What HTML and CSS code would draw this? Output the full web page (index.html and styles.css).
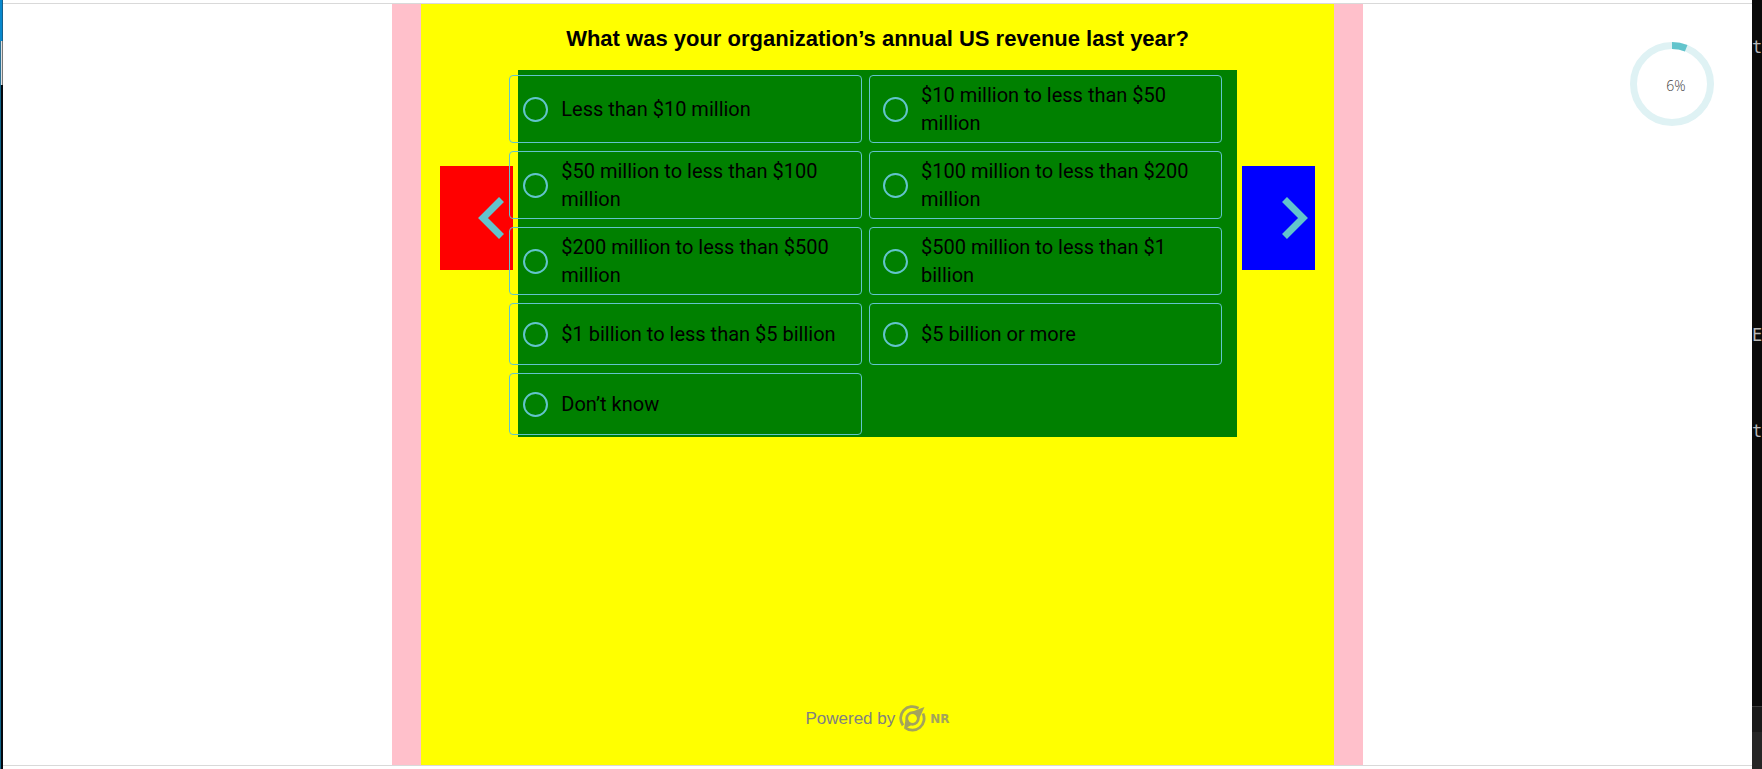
FILE: index.html
```html
<!DOCTYPE html>
<html lang="en">
<head>
<meta charset="utf-8">
<title>Survey</title>
<link rel="stylesheet" href="styles.css">
</head>
<body>
<div class="screen">
  <div class="edge-left"><div class="edge-blue"></div><div class="edge-grey"></div><div class="edge-black"></div></div>
  <div class="page">
    <main class="survey">
      <form class="panel">
        <h1 class="question" id="question">What was your organization’s annual US revenue last year?</h1>
        <div class="stage">
          <button type="button" class="nav nav-prev" aria-label="Previous">
            <svg width="26" height="42" viewBox="0 0 26 42"><path d="M23.500 2.500 5 21l18.500 18.500" fill="none" stroke="#62c4cc" stroke-width="7"/></svg>
          </button>
          <div class="answers" role="radiogroup" aria-labelledby="question">
            <div class="options">
              <label class="option"><input type="radio" name="revenue"><span>Less than $10 million</span></label>
              <label class="option"><input type="radio" name="revenue"><span>$10 million to less than $50 million</span></label>
              <label class="option"><input type="radio" name="revenue"><span>$50 million to less than $100 million</span></label>
              <label class="option"><input type="radio" name="revenue"><span>$100 million to less than $200 million</span></label>
              <label class="option"><input type="radio" name="revenue"><span>$200 million to less than $500 million</span></label>
              <label class="option"><input type="radio" name="revenue"><span>$500 million to less than $1 billion</span></label>
              <label class="option"><input type="radio" name="revenue"><span>$1 billion to less than $5 billion</span></label>
              <label class="option"><input type="radio" name="revenue"><span>$5 billion or more</span></label>
              <label class="option"><input type="radio" name="revenue"><span>Don’t know</span></label>
            </div>
          </div>
          <button type="button" class="nav nav-next" aria-label="Next">
            <svg width="26" height="42" viewBox="0 0 26 42"><path d="M2.500 2.500 21 21 2.500 39.500" fill="none" stroke="#62c4cc" stroke-width="7"/></svg>
          </button>
        </div>
        <footer class="powered">
          <span>Powered by</span>
          <svg width="27" height="27" viewBox="0 0 27 27" fill="none" stroke="#a3a35c">
            <path d="M19.500 3.300A11.700 11.700 0 0 0 4 20.300" stroke-width="2.800"/>
            <path d="M24 8.500A11.700 11.700 0 0 1 6.500 22.900" stroke-width="2.800"/>
            <circle cx="13.500" cy="13.500" r="5.700" stroke-width="3"/>
            <path d="M25.500 2 13.500 6.500l7 6.500zM5 24 6.500 14.500l6 5.500z" fill="#a3a35c" stroke="none"/>
            <circle cx="13.500" cy="13.500" r="4.200" fill="#ff0" stroke="none"/>
          </svg>
          <span class="brand">NR</span>
        </footer>
      </form>
    </main>
    <div class="progress">
      <svg width="84" height="84" viewBox="0 0 84 84" fill="none" stroke-width="7">
        <circle cx="42" cy="42" r="38.500" stroke="#dff2f4"/>
        <circle cx="42" cy="42" r="38.500" stroke="#62c4cc" pathLength="100" stroke-dasharray="6 94" transform="rotate(-90 42 42)"/>
      </svg>
      <span class="percent">6%</span>
    </div>
  </div>
  <div class="edge-right">
    <div class="terminal"><span class="glyph">t</span><span class="glyph glyph-e">E</span><span class="glyph glyph-t">t</span></div>
    <div class="tabs"></div>
    <div class="status"></div>
  </div>
</div>
</body>
</html>
```
FILE: styles.css
```css
* { box-sizing: border-box; }
body { margin: 0; background: #fff; }
.screen { display: flex; min-height: 100vh; }

.edge-left { width: 3px; display: flex; flex-direction: column; }
.edge-blue { height: 41px; background: #0788cd; border-right: 1px solid #16608c; }
.edge-grey { height: 44px; background: #e0e0e0; border-left: 1px solid #2a7094; border-right: 1px solid #777; }
.edge-black { flex: 1; background: #05080e; border-left: 1px solid #10658a; }

.page {
  flex: 1;
  min-width: 0;
  margin: 3px 0;
  border-top: 1px solid #d9d9d9;
  border-bottom: 1px solid #d9d9d9;
  display: grid;
  grid-template-columns: 1fr 55.5% 1fr;
}
.survey { grid-column: 2; background: #ffc0cb; padding: 0 3%; display: flex; }
.panel {
  flex: 1;
  min-width: 0;
  background: #ff0;
  padding: 21px 19px 33px;
  display: flex;
  flex-direction: column;
}
.question {
  margin: 0 0 17px;
  font: bold 22px/28px "Liberation Sans", Arial, sans-serif;
  text-align: center;
}
.stage { display: flex; align-items: flex-start; gap: 5px; }
.answers { flex: 1; min-width: 0; background: #008000; padding: 5px 15px 2px 0; }
.options {
  position: relative;
  margin-left: -9px;
  display: grid;
  grid-template-columns: 1fr 1fr;
  gap: 8px 7px;
}
.option {
  display: flex;
  align-items: center;
  gap: 13px;
  min-height: 62px;
  padding: 5px 16px 5px 13px;
  border: 1px solid #62c4cc;
  border-radius: 4px;
  font: 20px/28px Roboto, sans-serif;
}
.option input {
  appearance: none;
  flex: none;
  width: 25px;
  height: 25px;
  margin: 0;
  border: 2px solid #62c4cc;
  border-radius: 50%;
}
.option input:checked { background: #62c4cc; }
.nav {
  width: 73px;
  height: 104px;
  margin-top: 96px;
  border: 0;
  display: flex;
  align-items: center;
  justify-content: flex-end;
}
.nav-prev { background: #f00; padding: 0 9px; }
.nav-next { background: #00f; padding: 0 7px; }

.powered {
  margin-top: auto;
  display: flex;
  align-items: center;
  justify-content: center;
  gap: 4px;
  font: 17px/20px "Liberation Sans", Arial, sans-serif;
  color: #808080;
}
.brand { font: bold 12px/20px "DejaVu Sans", sans-serif; color: #a3a35c; }

.progress { justify-self: end; align-self: start; margin: 38px 38px 0 0; display: grid; }
.progress svg, .percent { grid-area: 1 / 1; }
.percent {
  align-self: center;
  justify-self: center;
  padding: 3px 0 0 8px;
  font: 300 14px/18px "Open Sans", sans-serif;
  color: #444;
}

.edge-right { width: 10px; display: flex; flex-direction: column; overflow: hidden; background: #0a0a0a; }
.terminal { flex: 1; padding-top: 37px; color: #b8b8b8; font: 17px/20px "DejaVu Sans Mono", monospace; }
.glyph { display: block; }
.glyph-e { margin-top: 268px; }
.glyph-t { margin-top: 76px; }
.tabs { height: 26px; background: #1a1a1a; border-top: 1px solid #3a3a3a; }
.status { height: 37px; background: #262626; }
```
